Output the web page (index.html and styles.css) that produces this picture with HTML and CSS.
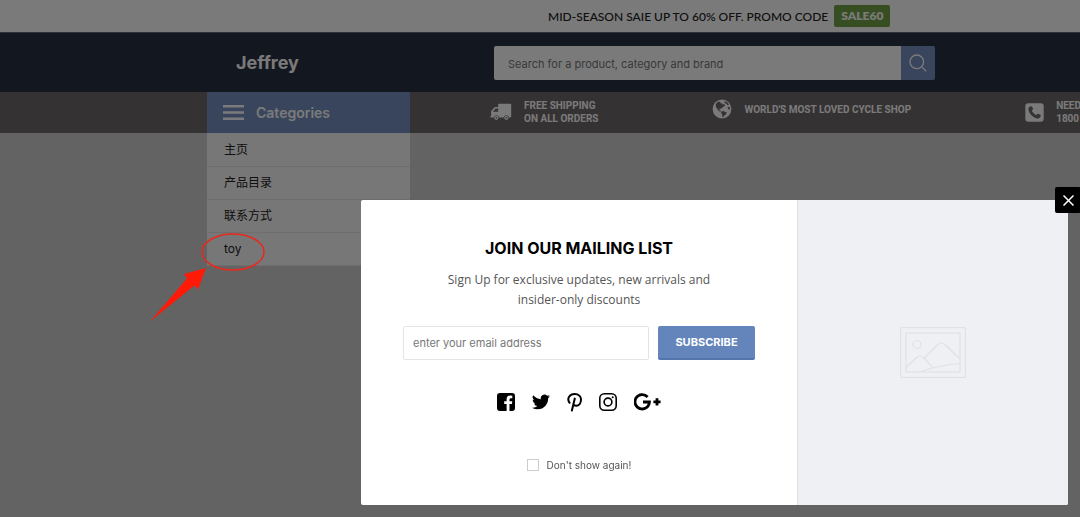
FILE: index.html
```html
<!DOCTYPE html>
<html lang="zh-CN">

<head>
    <meta charset="UTF-8">
    <meta name="viewport" content="width=device-width, initial-scale=1">
    <title>Jeffrey</title>
    <link rel="stylesheet" href="styles.css">
</head>

<body>

    <!-- Promo bar -->
    <div class="promo">
        <span>MID-SEASON SAIE UP TO 60% OFF. PROMO CODE</span>
        <strong class="promo-code">SALE60</strong>
    </div>

    <!-- Header -->
    <header class="header">
        <a class="logo" href="#">Jeffrey</a>
        <form class="search">
            <input class="search-input" type="text" aria-label="Search" placeholder="Search for a product, category and brand">
            <button class="search-button" type="button" aria-label="Search">
                <svg width="18" height="18" viewBox="0 0 18 18" fill="none" stroke="currentColor" stroke-width="1.3">
                    <circle cx="7.8" cy="7.8" r="6.8" />
                    <path d="M12.6 12.6L17.2 17.2" />
                </svg>
            </button>
        </form>
    </header>

    <!-- Categories and service strip -->
    <div class="strip">
        <button class="categories" type="button">
            <svg width="21" height="15" viewBox="0 0 21 15" fill="currentColor">
                <path d="M0 0h21v2.4H0zM0 6.3h21v2.4H0zM0 12.6h21V15H0z" />
            </svg>
            Categories
        </button>
        <div class="services">
            <div class="service">
                <svg width="22" height="18" viewBox="0 0 22 18" fill="currentColor">
                    <path fill-rule="evenodd" d="M9 0.8h11.4q0.8 0 0.8 0.8v12q0 0.8-0.8 0.8h-1.2a2.8 2.8 0 0 0-5.5 0H9.1a2.8 2.8 0 0 0-5.5 0H1q-0.8 0-0.8-0.7 0-0.6 0.9-0.7V8.6q0-0.7 0.5-1.2l2.7-2.8q0.4-0.5 1.1-0.5h2.8V1.6q0-0.8 0.8-0.8zM2.9 8.7h5.3V5.6H5.7z" />
                    <path fill-rule="evenodd" d="M6.3 12.7a2.1 2.1 0 1 0 .01 0zM6.3 13.9a.8.8 0 1 1-.01 0zM16.4 12.7a2.1 2.1 0 1 0 .01 0zM16.4 13.9a.8.8 0 1 1-.01 0z" />
                </svg>
                <span>FREE SHIPPING<br>ON ALL ORDERS</span>
            </div>
            <div class="service">
                <svg width="20" height="20" viewBox="0 0 20 20">
                    <circle cx="10" cy="10" r="9.4" fill="currentColor" />
                    <path fill="#6f696b" d="M4.3 4.2L6.6 2.6 8.6 3 8 4.4 9.8 4 10.6 5.4 12.4 5 13 6.8 10.6 8.2 9.4 9.8 7.8 9.6 7.2 11 8.8 11.8 9 12.8 7.2 12.2 5.6 10.4 4.2 8.2 3.6 6z" />
                    <path fill="#6f696b" d="M9.4 12.4l2-.4 1.6 1 1.8.6-.8 2-1.8 1-1 1.6-.8-.2-.2-2.4-1.2-1.6z" />
                    <path fill="#6f696b" d="M12.6 1.9l2.8 1.5 1.6 2.2-1.6.7-.9-1.6-1.9-.7zM15.5 8l2.2-.3.2 3.2-1.6-.8z" />
                </svg>
                <span>WORLD'S MOST LOVED CYCLE SHOP</span>
            </div>
            <div class="service">
                <svg width="19" height="19" viewBox="0 0 19 19">
                    <rect x="0.3" y="0.3" width="18.4" height="18.4" rx="3" fill="currentColor" />
                    <path fill="#6f696b" d="M5.4 3.4l1.1-.2q.4 0 .6.5l1 2.2q.1.4-.2.7L6.7 7.8q1.5 3 4.5 4.5l1.2-1.3q.4-.4.8-.2l2.1 1q.6.3.5.8-.2 1.7-1.5 2.5-1.5.8-3.8-.2-4.8-2.2-6.7-6.7-.8-2.2 0-3.6.5-.9 1.6-1.2z" />
                </svg>
                <span>NEED<br>1800</span>
            </div>
        </div>
    </div>

    <nav class="menu">
        <a href="#">主页</a>
        <a href="#">产品目录</a>
        <a href="#">联系方式</a>
        <a href="#">toy</a>
    </nav>

    <!-- Newsletter popup -->
    <div class="overlay">
        <div class="modal" role="dialog" aria-labelledby="modalTitle">
            <div class="modal-content">
                <h2 class="modal-title" id="modalTitle">JOIN OUR MAILING LIST</h2>
                <p class="modal-text">Sign Up for exclusive updates, new arrivals and<br>insider-only discounts</p>
                <form class="subscribe">
                    <input class="subscribe-input" type="email" aria-label="Email address" placeholder="enter your email address">
                    <button class="subscribe-button" type="button">SUBSCRIBE</button>
                </form>
                <div class="social">
                    <a href="#" aria-label="Facebook">
                        <svg width="18" height="18" viewBox="0 0 18 18" fill="currentColor">
                            <path d="M3 0h12a3 3 0 0 1 3 3v12a3 3 0 0 1-3 3h-2.5v-7h2.4l.4-2.8h-2.8V6.5q0-1.3 1.4-1.3h1.4V2.7l-2-.1q-3.7 0-3.7 3.7v1.9H7.2V11h2.4v7H3a3 3 0 0 1-3-3V3a3 3 0 0 1 3-3z" />
                        </svg>
                    </a>
                    <a href="#" aria-label="Twitter">
                        <svg width="18" height="16" viewBox="0 0 24 20" fill="currentColor">
                            <path d="M24 2.4a9.8 9.8 0 0 1-2.8.8A5 5 0 0 0 23.3.5a9.9 9.9 0 0 1-3.1 1.2 4.9 4.9 0 0 0-8.4 4.5A14 14 0 0 1 1.7 1 4.9 4.9 0 0 0 3.2 7.6a4.9 4.9 0 0 1-2.2-.6v.1a4.9 4.9 0 0 0 3.9 4.8 5 5 0 0 1-2.2.1 4.9 4.9 0 0 0 4.6 3.4A9.9 9.9 0 0 1 0 17.5a13.9 13.9 0 0 0 7.5 2.2c9.1 0 14.3-7.7 14-14.7A10 10 0 0 0 24 2.4z" />
                        </svg>
                    </a>
                    <a href="#" aria-label="Pinterest">
                        <svg width="15" height="19" viewBox="0 0 15 19" fill="none" stroke="currentColor" stroke-width="2" stroke-linecap="round">
                            <path d="M2.6 9.8C-.6 5.6 2.8 1 7.7 1c4 0 6.3 2.5 6.3 5.5 0 3.7-2.1 6.3-4.8 6.3-1.5 0-2.6-.8-2.8-1.9M7.8 5.6L4.9 17.6" />
                        </svg>
                    </a>
                    <a href="#" aria-label="Instagram">
                        <svg width="18" height="18" viewBox="0 0 18 18" fill="none" stroke="currentColor" stroke-width="1.6">
                            <rect x="0.8" y="0.8" width="16.4" height="16.4" rx="4.5" />
                            <circle cx="9" cy="9" r="3.9" />
                            <circle cx="13.7" cy="4.3" r="1" fill="currentColor" stroke="none" />
                        </svg>
                    </a>
                    <a href="#" aria-label="Google Plus">
                        <svg width="27" height="18" viewBox="0 0 27 18" fill="none" stroke="currentColor" stroke-width="2.8">
                            <path d="M13.6 4A7.2 7.2 0 1 0 15.4 9H9M23 5.2v7.2M19.4 8.8h7.2" />
                        </svg>
                    </a>
                </div>
                <label class="dismiss">
                    <input type="checkbox">
                    Don't show again!
                </label>
            </div>
            <div class="modal-image">
                <svg width="66" height="51" viewBox="0 0 66 51" fill="none" stroke="#e0e1e3" stroke-width="1.2">
                    <rect x="0.6" y="0.6" width="64.8" height="49.8" rx="1" />
                    <rect x="6" y="6" width="54" height="39" />
                    <circle cx="17" cy="17.5" r="4" />
                    <path d="M6 40.5L16.5 30.5Q20 27.5 23.5 30.5L33 41M24.5 31L38 17.5Q41.5 14.5 45 17.5L60 32M21 44.5Q40 38 60 36.5" />
                </svg>
            </div>
            <button class="close" type="button" aria-label="Close">
                <svg width="11" height="11" viewBox="0 0 11 11" stroke="currentColor" stroke-width="1.5">
                    <path d="M0.5 0.5L10.5 10.5M10.5 0.5L0.5 10.5" />
                </svg>
            </button>
        </div>
    </div>

    <!-- Red marker around the last menu item -->
    <svg class="marker" width="120" height="92" viewBox="0 0 120 92">
        <ellipse cx="83" cy="20" rx="31" ry="18" fill="none" stroke="#e8291c" stroke-width="1.5" />
        <path d="M0 89.5L37 46.5 34 42 56 36 48 57.5 44.5 53.5z" fill="#ff1a08" />
    </svg>

</body>

</html>
```

FILE: styles.css
```css
* {
    box-sizing: border-box;
}

body {
    margin: 0;
    min-height: 100vh;
    overflow: hidden;
    background-color: #cfcfcf;
    color: #222;
    font-family: Inter, "Noto Sans CJK SC", sans-serif;
    font-size: 12px;
}

button,
input {
    font-family: inherit;
    border: none;
}

svg {
    display: block;
    flex-shrink: 0;
}

a {
    color: inherit;
    text-decoration: none;
}

.promo {
    display: flex;
    align-items: center;
    gap: 6px;
    height: 32px;
    padding-left: 548px;
    background-color: #fff;
    font-family: Lato, sans-serif;
    font-weight: 500;
    white-space: nowrap;
}

.promo-code {
    padding: 0 7px;
    border-radius: 2px;
    background-color: #74a349;
    color: #fff;
    font-weight: 800;
    line-height: 22px;
}

.header {
    display: flex;
    align-items: center;
    height: 60px;
    padding-left: 236px;
    padding-right: 145px;
    border-top: 1px solid #5f6679;
    background-color: #293042;
}

.logo {
    width: 258px;
    color: #fff;
    font-size: 18px;
    font-weight: 700;
}

.search {
    display: flex;
    flex: 1;
    height: 34px;
    border-radius: 2px;
    overflow: hidden;
}

.search-input {
    flex: 1;
    padding: 2px 14px 0;
    background-color: #fff;
    font-size: 11px;
}

.search-input::placeholder {
    color: #777;
    opacity: 1;
}

.search-button {
    display: flex;
    align-items: center;
    justify-content: center;
    width: 34px;
    padding: 0;
    background-color: #7891c1;
    color: #fff;
}

.strip {
    display: flex;
    height: 41px;
    padding-left: 207px;
    background-color: #6f696b;
    color: #fff;
}

.categories {
    display: flex;
    align-items: center;
    flex-shrink: 0;
    gap: 12px;
    width: 203px;
    padding: 0 16px;
    background-color: #7891c1;
    color: #fff;
    font-size: 14px;
    font-weight: 600;
}

.services {
    display: flex;
    align-items: flex-start;
    flex: 1;
    gap: 114px;
    padding-top: 7px;
    padding-left: 80px;
    overflow: hidden;
    font-family: Roboto, sans-serif;
    font-size: 10px;
    font-weight: 700;
    line-height: 13px;
    white-space: nowrap;
}

.service {
    display: flex;
    align-items: center;
    gap: 12px;
}

.menu {
    width: 203px;
    margin-left: 207px;
    padding-top: 1px;
    background-color: #f8f8f8;
}

.menu a {
    display: block;
    padding-left: 17px;
    border-bottom: 1px solid #e5e5e5;
    line-height: 32px;
}

.overlay {
    position: fixed;
    inset: 0;
    display: flex;
    align-items: flex-end;
    padding: 0 12px 12px 361px;
    background-color: rgba(0, 0, 0, 0.52);
}

.modal {
    position: relative;
    display: grid;
    grid-template-columns: 436fr 271fr;
    flex: 1;
    border-radius: 2px;
    background-color: #fff;
}

.modal-content {
    display: flex;
    flex-direction: column;
    align-items: center;
    padding: 36px 42px 32px;
    color: #555;
}

.modal-title {
    margin: 0;
    color: #000;
    font-size: 16px;
    font-weight: 700;
    line-height: 24px;
}

.modal-text {
    margin: 10px 0 16px;
    font-family: "Open Sans", sans-serif;
    font-size: 12px;
    line-height: 20px;
    text-align: center;
}

.subscribe {
    display: flex;
    gap: 9px;
    width: 100%;
    height: 34px;
}

.subscribe-input {
    flex: 1;
    min-width: 0;
    padding: 0 9px;
    border: 1px solid #e4e4e4;
    border-radius: 2px;
    font-size: 11px;
}

.subscribe-input::placeholder {
    color: #777;
    opacity: 1;
}

.subscribe-button {
    width: 97px;
    padding: 0;
    border-bottom: 2px solid #5575ac;
    border-radius: 2px;
    background-color: #6485bc;
    color: #fff;
    font-size: 11px;
    font-weight: 700;
}

.social {
    display: flex;
    align-items: center;
    gap: 17px;
    height: 20px;
    margin: 32px 0 45px;
    color: #000;
}

.dismiss {
    display: flex;
    align-items: center;
    gap: 8px;
    font-size: 10px;
    line-height: 16px;
}

.dismiss input {
    appearance: none;
    width: 12px;
    height: 12px;
    margin: 0;
    border: 1px solid #ccc;
    background-color: #fff;
}

.modal-image {
    display: flex;
    align-items: center;
    justify-content: center;
    border-left: 1px solid #dcdfe3;
    border-radius: 0 2px 2px 0;
    background-color: #eff0f3;
}

.close {
    position: absolute;
    top: -13px;
    right: -13px;
    display: flex;
    align-items: center;
    justify-content: center;
    width: 26px;
    height: 26px;
    padding: 0;
    border-radius: 2px;
    background-color: #000;
    color: #fff;
}

.marker {
    position: absolute;
    top: 232px;
    left: 150px;
    pointer-events: none;
}
```
